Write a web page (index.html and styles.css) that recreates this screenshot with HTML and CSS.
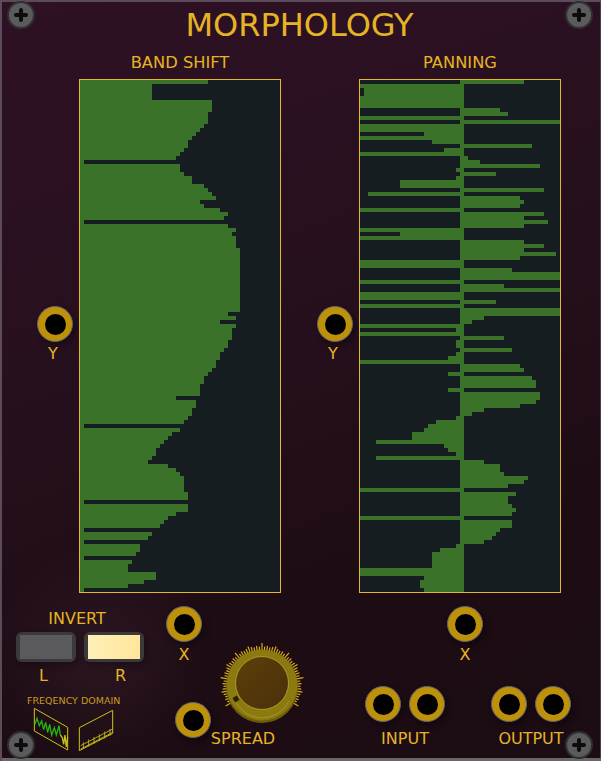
FILE: index.html
```html
<!DOCTYPE html>
<html lang="en">
<head>
    <meta charset="UTF-8">
    <meta name="viewport" content="width=device-width, initial-scale=1.0">
    <title>Morphology</title>
    <link rel="stylesheet" href="styles.css">
</head>
<body>
<div class="panel">
    <div class="screw top-left"></div>
    <div class="screw top-right"></div>
    <div class="screw bottom-left"></div>
    <div class="screw bottom-right"></div>

    <h1 class="title">MORPHOLOGY</h1>

    <div class="scopes">
        <div class="unit">
            <div class="side">
                <div class="jack"></div>
                <div class="label">Y</div>
            </div>
            <div class="scope-col">
                <div class="scope-title">BAND SHIFT</div>
                <div class="scope" id="bandShift"></div>
            </div>
        </div>
        <div class="unit">
            <div class="side">
                <div class="jack"></div>
                <div class="label">Y</div>
            </div>
            <div class="scope-col">
                <div class="scope-title">PANNING</div>
                <div class="scope" id="panning"></div>
            </div>
        </div>
    </div>

    <div class="controls">
        <div class="invert-col">
            <div class="label invert-label">INVERT</div>
            <div class="switches">
                <div class="switch"><div class="lamp"></div></div>
                <div class="switch"><div class="lamp on"></div></div>
            </div>
            <div class="switch-labels">
                <div class="label">L</div>
                <div class="label">R</div>
            </div>
            <div class="freq">
                <div class="freq-label">FREQENCY DOMAIN</div>
                <svg class="freq-icon" viewBox="36 60 279 150" width="93" height="50">
                    <polygon class="frame" points="58,70 158,127 158,195 58,138"/>
                    <polyline class="wave" points="60,118 66,100 73,122 80,108 86,134 92,112 98,142 104,118 110,150 118,128 124,150 132,122 136,150"/>
                    <polyline class="wave-end" points="136,150 142,158 146,178 150,150 154,186 158,156"/>
                    <polygon class="frame" points="193,128 293,76 293,145 193,197"/>
                    <path class="frame thin" d="M197 182 L293 132 M197 192 L293 142 M205 172 V192 M221 164 V184 M237 156 V176 M253 148 V168 M269 140 V160 M285 132 V152"/>
                </svg>
            </div>
        </div>

        <div class="x-col">
            <div class="jack-stack first-x">
                <div class="jack"></div>
                <div class="label">X</div>
            </div>
            <div class="jack spread-jack"></div>
        </div>

        <div class="knob-col">
            <svg class="knob" viewBox="0 0 90 90" width="90" height="90">
                <defs>
                    <linearGradient id="capFill" x1="0" y1="0" x2="1" y2="1">
                        <stop offset="0" stop-color="#5f3f07"/>
                        <stop offset="1" stop-color="#47300d"/>
                    </linearGradient>
                </defs>
                <g id="knobTicks" class="ticks"></g>
                <circle cx="45" cy="48" r="36" fill="#6a5c0a"/>
                <circle cx="45" cy="46" r="35.5" fill="#8a7a10"/>
                <path class="skirt" d="M18 62 A30 30 0 0 0 72 62"/>
                <circle cx="45" cy="44" r="26.5" fill="url(#capFill)" stroke="#bfa82c" stroke-width="0.8"/>
                <rect x="16.5" y="57.5" width="5" height="5" fill="#2a2208" transform="rotate(-30 19 60)"/>
            </svg>
            <div class="label spread-label">SPREAD</div>
        </div>

        <div class="right-col">
            <div class="jack-stack second-x">
                <div class="jack"></div>
                <div class="label">X</div>
            </div>
            <div class="io-row">
                <div class="io-group">
                    <div class="jack-pair">
                        <div class="jack"></div>
                        <div class="jack"></div>
                    </div>
                    <div class="label">INPUT</div>
                </div>
                <div class="io-group">
                    <div class="jack-pair">
                        <div class="jack"></div>
                        <div class="jack"></div>
                    </div>
                    <div class="label">OUTPUT</div>
                </div>
            </div>
        </div>
    </div>
</div>
<script src="scope.js"></script>
</body>
</html>
```

FILE: styles.css
```css
body {
    margin: 0;
    background-color: #1c0c14;
    font-family: "DejaVu Sans", Arial, sans-serif;
}
.panel {
    position: relative;
    width: 601px;
    height: 761px;
    overflow: hidden;
    color: #e4b425;
    background:
        radial-gradient(circle at 100px 655px, #2b1620 0, rgba(43, 22, 32, 0) 110px),
        linear-gradient(160deg, #2e1124 0%, #27101e 40%, #1d0c14 75%, #1c0c14 100%);
    box-shadow: inset 2px 2px 0 #5c4c5a, inset 0 -3px 0 #6a666a, inset -1px 0 0 #4a3c48;
}
.title {
    margin: 0;
    padding-top: 3px;
    padding-right: 2px;
    font-size: 32px;
    font-weight: normal;
    line-height: 44px;
    text-align: center;
}
.label {
    font-size: 16px;
    line-height: 20px;
    text-align: center;
    white-space: nowrap;
}

/* scopes */
.scopes {
    display: flex;
    margin-top: 5px;
}
.unit {
    display: flex;
    width: 280px;
}
.side {
    flex: none;
    width: 79px;
    box-sizing: border-box;
    padding-top: 254px;
    padding-left: 37px;
}
.side .jack {
    margin-bottom: 2px;
}
.side .label {
    width: 32px;
}
.scope-col {
    flex: none;
    width: 202px;
}
.scope-title {
    margin-bottom: 6px;
    padding-top: 1px;
    font-size: 16.3px;
    line-height: 20px;
    text-align: center;
}
.scope {
    width: 200px;
    height: 512px;
    border: 1px solid #e4b82a;
    background-color: #151d20;
}
.bar {
    height: 4px;
    background-color: #3b722a;
}

/* jacks */
.jack {
    display: flex;
    align-items: center;
    justify-content: center;
    width: 36px;
    height: 36px;
    box-sizing: border-box;
    border: 1.5px solid #66626a;
    border-radius: 50%;
    background-color: #bd9109;
    box-shadow: 3px 4px 7px rgba(0, 0, 0, 0.35);
}
.jack::after {
    content: "";
    width: 21px;
    height: 21px;
    border-radius: 50%;
    background-color: #000;
}

/* bottom row */
.controls {
    display: flex;
    height: 168px;
}
.invert-col {
    width: 165px;
    box-sizing: border-box;
    padding-top: 16px;
    padding-left: 16px;
}
.invert-label {
    width: 122px;
}
.switches {
    display: flex;
    gap: 8px;
    margin-top: 3px;
}
.switch {
    display: flex;
    align-items: center;
    justify-content: center;
    width: 60px;
    height: 30px;
    border-radius: 6px;
    background-color: #3a393c;
    box-shadow: 2px 3px 6px rgba(0, 0, 0, 0.3);
}
.lamp {
    width: 52px;
    height: 24px;
    background-color: #5a5a5c;
}
.lamp.on {
    background: linear-gradient(100deg, #fff0b8, #ffe59a);
}
.switch-labels {
    display: flex;
    gap: 8px;
    margin-top: 4px;
}
.switch-labels .label {
    width: 55px;
}
.switch-labels .label + .label {
    margin-left: 14px;
}
.freq {
    width: 93px;
    margin-top: 8px;
    margin-left: 11px;
}
.freq-label {
    color: #c99c20;
    font-size: 9.5px;
    line-height: 14px;
    text-align: center;
    white-space: nowrap;
}
.freq-icon {
    display: block;
    margin-top: -3px;
    fill: none;
}
.frame {
    stroke: #c9c21a;
    stroke-width: 3;
    fill: none;
}
.frame.thin {
    stroke-width: 2.5;
}
.wave {
    stroke: #22b60e;
    stroke-width: 4;
    fill: none;
}
.wave-end {
    stroke: #c9c21a;
    stroke-width: 4;
    fill: none;
}

.x-col {
    width: 52px;
}
.first-x {
    margin-top: 13px;
    margin-left: 1px;
}
.jack-stack {
    width: 36px;
}
.jack-stack .label {
    margin-top: 3px;
}
.spread-jack {
    margin-top: 37px;
    margin-left: 10px;
}

.knob-col {
    width: 90px;
    padding-top: 46px;
}
.knob {
    display: block;
}
.ticks line {
    stroke: #d9ab20;
    stroke-width: 1.2;
}
.skirt {
    fill: none;
    stroke: #b09a28;
    stroke-width: 0.8;
}
.spread-label {
    display: flex;
    justify-content: center;
    box-sizing: border-box;
    padding-right: 38px;
}

.right-col {
    flex: 1;
}
.second-x {
    margin-top: 13px;
    margin-left: 140px;
}
.io-row {
    display: flex;
    gap: 46px;
    margin-top: 21px;
    margin-left: 58px;
}
.jack-pair {
    display: flex;
    gap: 8px;
}
.io-group .label {
    margin-top: 7px;
}

/* screws sit over the panel corners */
.screw {
    position: absolute;
    width: 24px;
    height: 24px;
    border: 2px solid #303032;
    border-radius: 50%;
    background-color: #5b5b5d;
}
.screw::before,
.screw::after {
    content: "";
    position: absolute;
    border-radius: 2px;
    background-color: #0c0c0c;
}
.screw::before {
    left: 5px;
    top: 10px;
    width: 14px;
    height: 4px;
}
.screw::after {
    left: 10px;
    top: 5px;
    width: 4px;
    height: 14px;
}
.top-left { left: 7px; top: 1px; }
.top-right { left: 565px; top: 1px; }
.bottom-left { left: 7px; top: 731px; }
.bottom-right { left: 565px; top: 731px; }
```

FILE: scope.js
```js
// green width of each row, in 4px columns
const bandShift = [
    32, 18, 18, 18, 18, 33, 33, 33, 32, 32, 32, 31, 30, 29, 28, 27,
    27, 26, 25, 24, 1, 25, 25, 26, 28, 28, 31, 32, 33, 34, 30, 31,
    35, 37, 36, 1, 37, 39, 38, 39, 39, 39, 40, 40, 40, 40, 40, 40,
    40, 40, 40, 40, 40, 40, 40, 40, 40, 40, 37, 39, 35, 39, 38, 38,
    38, 37, 37, 36, 35, 35, 34, 34, 33, 32, 31, 31, 30, 30, 30, 24,
    29, 29, 28, 28, 27, 26, 1, 25, 23, 22, 21, 20, 19, 19, 18, 17,
    22, 24, 25, 26, 26, 26, 26, 27, 27, 1, 27, 27, 24, 22, 21, 20,
    1, 18, 17, 1, 15, 15, 14, 1, 13, 12, 12, 19, 19, 16, 12, 1
];

// up to 25 = bar starts at that column and ends at the middle
// from 26 = bar starts at the middle and ends at that column
const panning = [
    41, 0, 1, 1, 0, 0, 0, 35, 37, 0, 50, 0, 0, 16, 0, 18,
    43, 21, 0, 27, 30, 45, 24, 34, 24, 10, 10, 46, 2, 40, 41, 40,
    0, 46, 41, 47, 41, 0, 10, 0, 41, 46, 41, 49, 40, 0, 0, 38,
    50, 50, 0, 36, 50, 0, 0, 34, 0, 50, 50, 31, 28, 0, 24, 0,
    36, 24, 24, 38, 24, 22, 0, 40, 41, 22, 43, 44, 44, 22, 45, 45,
    44, 40, 31, 28, 24, 19, 17, 16, 13, 13, 4, 21, 22, 24, 4, 31,
    35, 35, 36, 42, 41, 37, 0, 39, 37, 37, 38, 39, 38, 0, 38, 38,
    35, 34, 33, 31, 24, 20, 18, 18, 18, 18, 0, 0, 16, 15, 15, 16
];

function addBar(scope, start, end) {
    const bar = document.createElement('div');
    bar.className = 'bar';
    bar.style.marginLeft = (start * 4) + 'px';
    bar.style.width = ((end - start) * 4) + 'px';
    scope.appendChild(bar);
}

bandShift.forEach(function (v) {
    addBar(document.getElementById('bandShift'), 0, v);
});

panning.forEach(function (v) {
    if (v <= 25) {
        addBar(document.getElementById('panning'), v, 26);
    } else {
        addBar(document.getElementById('panning'), 25, v);
    }
});

// knob scale, 240 degrees
let ticks = '';
for (let i = 0; i <= 60; i++) {
    const a = (150 + i * 4) * Math.PI / 180;
    const inner = 35;
    let outer = 39.5;
    if (i % 10 === 0) outer = 42;
    else if (i % 5 === 0) outer = 41;
    else if (i % 2 === 1) outer = 38.5;
    const x1 = 45 + inner * Math.cos(a), y1 = 46 + inner * Math.sin(a);
    const x2 = 45 + outer * Math.cos(a), y2 = 46 + outer * Math.sin(a);
    ticks += '<line x1="' + x1 + '" y1="' + y1 + '" x2="' + x2 + '" y2="' + y2 + '"/>';
}
document.getElementById('knobTicks').innerHTML = ticks;
```
